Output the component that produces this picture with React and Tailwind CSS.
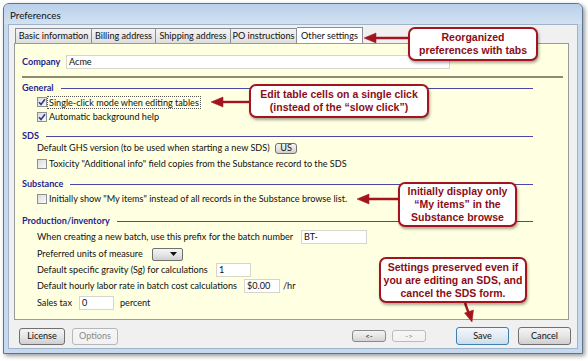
import React from 'react';

// Small Win7-ish form controls
const Check = ({ checked }) => (
    <span className="w-[10px] h-[10px] shrink-0 border border-[#8e8f8f] bg-linear-to-br from-[#dcdcdc] to-[#fafafa] flex items-center justify-center">
        {checked && (
            <svg width="8" height="8" viewBox="0 0 8 8">
                <path d="M1 4.2 L3 6.4 L7 1.2" fill="none" stroke="#2a3f8c" strokeWidth="1.6" />
            </svg>
        )}
    </span>
);

const Field = ({ value, className }) => (
    <div className={`h-[14px] shrink-0 bg-white border border-[#d6d6cf] flex items-center pl-[2px] ${className}`}>
        {value}
    </div>
);

const Btn = ({ children, className }) => (
    <div className={`flex items-center justify-center rounded-[3px] border bg-linear-to-b ${className}`}>
        {children}
    </div>
);

const Section = ({ title, className }) => (
    <div className={`flex items-center h-[12px] ml-[7px] w-[511px] ${className}`}>
        <span className="font-bold text-[#1f1f8f] whitespace-nowrap">{title}</span>
        <span className="ml-[7px] flex-1 h-px bg-[#4a4aa6]" />
    </div>
);

const Row = ({ children, className }) => (
    <div className={`flex items-center h-[12px] ml-[22px] whitespace-nowrap ${className}`}>{children}</div>
);

const Tab = ({ label, className }) => (
    <div className={`h-[15px] flex items-center justify-center border-t border-r border-[#8a8d95] bg-linear-to-b from-[#f4f4f4] to-[#dedede] whitespace-nowrap ${className}`}>
        {label}
    </div>
);

const Callout = ({ lines, className }) => (
    <div className={`absolute flex flex-col items-center justify-center bg-white border-2 border-[#a3141f] rounded-[7px] shadow-[1px_2px_3px_rgba(0,0,0,0.35)] font-['Liberation_Sans',Arial,sans-serif] font-bold text-[10.5px] leading-[13px] text-[#8b0d16] ${className}`}>
        {lines.map((l) => (
            <span key={l} className="whitespace-nowrap">{l}</span>
        ))}
    </div>
);

const App = () => {
    return (
        <div className="relative w-[588px] h-[361px] bg-white overflow-hidden pt-[3px] pl-[3px] font-['Lato',sans-serif] text-[9.1px] text-[#111]">
            {/* Window */}
            <div className="w-[580px] h-[351px] flex flex-col rounded-t-[6px] border border-[#60748b] bg-[#c6d9ee] shadow-[2px_2px_4px_rgba(0,0,0,0.4)]">
                <div className="h-[20px] pt-[2px] pl-[6px] flex items-center rounded-t-[5px] bg-linear-to-b from-[#b9d0ea] to-[#d2e1f2] text-[9.8px]">
                    Preferences
                </div>

                <div className="flex-1 mx-[4px] mb-[4px] border border-[#9fb3ca] bg-[#f0f0f0] flex flex-col">
                    {/* Tabs */}
                    <div className="h-[18px] pl-[6px] flex items-end">
                        <Tab label="Basic information" className="w-[77px] border-l" />
                        <Tab label="Billing address" className="w-[64px]" />
                        <Tab label="Shipping address" className="w-[75px]" />
                        <Tab label="PO instructions" className="w-[66px]" />
                        <div className="h-[16px] w-[66px] flex items-center justify-center border-t border-r border-[#8a8d95] bg-white whitespace-nowrap">
                            Other settings
                        </div>
                    </div>

                    {/* Settings panel */}
                    <div className="ml-[5px] w-[555px] h-[277px] border border-[#9a9a9a] bg-[#ffffe1] flex flex-col">
                        <div className="mt-[11px] ml-[7px] h-[14px] flex items-center">
                            <span className="w-[44px] font-bold text-[#1f1f8f]">Company</span>
                            <Field value="Acme" className="w-[384px]" />
                        </div>
                        <div className="mt-[7px] ml-[7px] w-[541px] h-[2px] bg-[#8d8b72]" />

                        <Section title="General" className="mt-[4px]" />
                        <Row className="mt-[2px]">
                            <Check checked />
                            <span className="ml-[1px] px-[1px] outline outline-1 outline-dotted outline-[#555] leading-[11px]">
                                Single-click mode when editing tables
                            </span>
                        </Row>
                        <Row className="mt-[3px]">
                            <Check checked />
                            <span className="ml-[2px]">Automatic background help</span>
                        </Row>

                        <Section title="SDS" className="mt-[7px]" />
                        <Row>
                            <span className="w-[238px]">Default GHS version (to be used when starting a new SDS)</span>
                            <Btn className="w-[22px] h-[11px] rounded-[2px] border-[#707070] from-[#f4f4f4] via-[#e4e4e4] to-[#cfcfcf]">US</Btn>
                        </Row>
                        <Row className="mt-[4px]">
                            <Check />
                            <span className="ml-[2px]">Toxicity "Additional info" field copies from the Substance record to the SDS</span>
                        </Row>

                        <Section title="Substance" className="mt-[8px]" />
                        <Row className="mt-[3px]">
                            <Check />
                            <span className="ml-[2px]">Initially show "My items" instead of all records in the Substance browse list.</span>
                        </Row>

                        <Section title="Production/inventory" className="mt-[10px]" />
                        <Row className="mt-[4px]">
                            <span className="w-[264px]">When creating a new batch, use this prefix for the batch number</span>
                            <Field value="BT-" className="w-[66px]" />
                        </Row>
                        <Row className="mt-[5px]">
                            <span className="w-[115px]">Preferred units of measure</span>
                            <div className="w-[31px] h-[13px] rounded-[2px] border border-[#707070] bg-linear-to-b from-[#f4f4f4] via-[#e6e6e6] to-[#d0d0d0] flex items-center justify-end pr-[5px]">
                                <svg width="7" height="4" viewBox="0 0 7 4">
                                    <path d="M0 0 H7 L3.5 4 Z" fill="#111" />
                                </svg>
                            </div>
                        </Row>
                        <Row className="mt-[4px]">
                            <span className="w-[179px]">Default specific gravity (Sg) for calculations</span>
                            <Field value="1" className="w-[35px]" />
                        </Row>
                        <Row className="mt-[4px]">
                            <span className="w-[207px]">Default hourly labor rate in batch cost calculations</span>
                            <Field value="$0.00" className="w-[36px]" />
                            <span className="ml-[3px]">/hr</span>
                        </Row>
                        <Row className="mt-[5px]">
                            <span className="w-[42px]">Sales tax</span>
                            <Field value="0" className="w-[35px]" />
                            <span className="ml-[6px]">percent</span>
                        </Row>
                    </div>

                    {/* Bottom buttons */}
                    <div className="mt-[7px] h-[18px] pl-[10px] flex items-center">
                        <Btn className="w-[46px] h-[17px] border-[#707070] from-[#f4f4f4] via-[#e6e6e6] to-[#cfcfcf]">License</Btn>
                        <Btn className="ml-[7px] w-[46px] h-[17px] border-[#b4b8bc] from-[#f6f6f6] to-[#f1f1f1] text-[#8a8a8a]">Options</Btn>
                        <Btn className="ml-[234px] w-[34px] h-[12px] border-[#8a8a8a] from-[#f4f4f4] via-[#e6e6e6] to-[#d4d4d4] text-[8px]">&lt;-</Btn>
                        <Btn className="ml-[6px] w-[34px] h-[12px] border-[#b8bcc0] from-[#f6f6f6] to-[#f1f1f1] text-[8px] text-[#8a8a8a]">-&gt;</Btn>
                        <Btn className="ml-[30px] w-[53px] h-[18px] border-[#3c7fb1] from-[#f2f7fb] via-[#e3ecf4] to-[#cfdce8]">Save</Btn>
                        <Btn className="ml-[9px] w-[53px] h-[18px] border-[#707070] from-[#f4f4f4] via-[#e6e6e6] to-[#cfcfcf]">Cancel</Btn>
                    </div>
                </div>
            </div>

            {/* Annotation arrows */}
            <svg className="absolute left-0 top-0 pointer-events-none" width="588" height="361" viewBox="0 0 588 361">
                <g fill="#a3141f" stroke="#a3141f">
                    <line x1="409" y1="38" x2="372" y2="38" strokeWidth="2.4" />
                    <polygon points="364,38 376,33 376,43" strokeWidth="0.5" />
                    <line x1="250" y1="102" x2="219" y2="102" strokeWidth="2.4" />
                    <polygon points="211,102 223,97 223,107" strokeWidth="0.5" />
                    <line x1="399" y1="199" x2="365" y2="199" strokeWidth="2.4" />
                    <polygon points="357,199 369,194 369,204" strokeWidth="0.5" />
                    <line x1="465" y1="303" x2="469" y2="314" strokeWidth="2.4" />
                    <polygon points="472,322 473.5,310 464.5,313" strokeWidth="0.5" />
                </g>
            </svg>

            {/* Callouts */}
            <Callout lines={['Reorganized', 'preferences with tabs']} className="left-[408px] top-[27px] w-[130px] h-[34px]" />
            <Callout lines={['Edit table cells on a single click', '(instead of the \u201cslow click\u201d)']} className="left-[249px] top-[84px] w-[180px] h-[34px]" />
            <Callout lines={['Initially display only', '\u201cMy items\u201d in the', 'Substance browse']} className="left-[398px] top-[182px] w-[119px] h-[45px]" />
            <Callout lines={['Settings preserved even if', 'you are editing an SDS, and', 'cancel the SDS form.']} className="left-[379px] top-[257px] w-[148px] h-[46px]" />
        </div>
    );
};

export default App;
